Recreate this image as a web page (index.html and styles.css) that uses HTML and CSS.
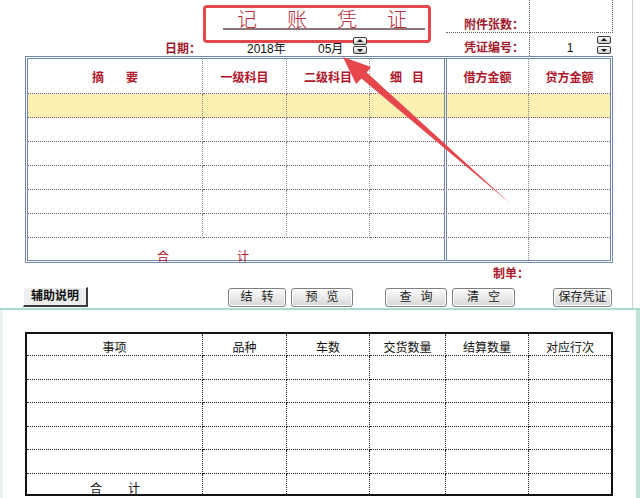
FILE: index.html
```html
<!DOCTYPE html>
<html lang="zh-CN">
<head>
    <meta charset="UTF-8">
    <title>记账凭证</title>
    <link rel="stylesheet" href="styles.css">
</head>
<body>
    <div class="page">
        <div class="sheet">
            <!-- heading: title, date, attachment count, voucher no. -->
            <div class="head">
                <div class="head-left">
                    <div class="title-row">
                        <div class="title-box"><span class="title">记账凭证</span></div>
                    </div>
                    <div class="date-row">
                        <span class="date-lbl">日期：</span>
                        <span class="year">2018年</span>
                        <span class="month">05月</span>
                        <div class="spin">
                            <span class="spin-btn up"></span>
                            <span class="spin-btn down"></span>
                        </div>
                    </div>
                </div>
                <div class="head-right">
                    <div class="info-lbl top sep">附件张数：</div>
                    <div class="info-val top"></div>
                    <div class="info-end top"></div>
                    <div class="info-lbl sep">凭证编号：</div>
                    <div class="info-val">1</div>
                    <div class="info-end">
                        <div class="spin">
                            <span class="spin-btn up"></span>
                            <span class="spin-btn down"></span>
                        </div>
                    </div>
                </div>
            </div>

            <!-- voucher entries -->
            <div class="voucher">
                <div class="vc hd spaced">摘要</div>
                <div class="vc hd">一级科目</div>
                <div class="vc hd">二级科目</div>
                <div class="vc hd m spaced-sm">细目</div>
                <div class="vc hd d">借方金额</div>
                <div class="vc hd cr">贷方金额</div>

                <div class="vc yl"></div><div class="vc yl"></div><div class="vc yl"></div><div class="vc yl m"></div><div class="vc yl d"></div><div class="vc yl cr"></div>
                <div class="vc"></div><div class="vc"></div><div class="vc"></div><div class="vc m"></div><div class="vc d"></div><div class="vc cr"></div>
                <div class="vc"></div><div class="vc"></div><div class="vc"></div><div class="vc m"></div><div class="vc d"></div><div class="vc cr"></div>
                <div class="vc"></div><div class="vc"></div><div class="vc"></div><div class="vc m"></div><div class="vc d"></div><div class="vc cr"></div>
                <div class="vc"></div><div class="vc"></div><div class="vc"></div><div class="vc m"></div><div class="vc d"></div><div class="vc cr"></div>
                <div class="vc"></div><div class="vc"></div><div class="vc"></div><div class="vc m"></div><div class="vc d"></div><div class="vc cr"></div>

                <div class="vc total"><span class="t1">合</span><span class="t2">计</span></div>
                <div class="vc d last"></div>
                <div class="vc cr last"></div>
            </div>

            <div class="maker">制单：</div>

            <div class="btnbar">
                <div class="aux">辅助说明</div>
                <div class="btn b-jz spaced-btn">结转</div>
                <div class="btn b-yl spaced-btn">预览</div>
                <div class="btn b-cx spaced-btn">查询</div>
                <div class="btn b-qk spaced-btn">清空</div>
                <div class="btn b-bc">保存凭证</div>
            </div>
        </div>
        <div class="rule"></div>

        <!-- delivery detail -->
        <div class="lower">
            <div class="detail">
                <div class="dc hd2">事项</div>
                <div class="dc hd2">品种</div>
                <div class="dc hd2">车数</div>
                <div class="dc hd2">交货数量</div>
                <div class="dc hd2">结算数量</div>
                <div class="dc hd2">对应行次</div>

                <div class="dc"></div><div class="dc"></div><div class="dc"></div><div class="dc"></div><div class="dc"></div><div class="dc"></div>
                <div class="dc"></div><div class="dc"></div><div class="dc"></div><div class="dc"></div><div class="dc"></div><div class="dc"></div>
                <div class="dc"></div><div class="dc"></div><div class="dc"></div><div class="dc"></div><div class="dc"></div><div class="dc"></div>
                <div class="dc"></div><div class="dc"></div><div class="dc"></div><div class="dc"></div><div class="dc"></div><div class="dc"></div>
                <div class="dc"></div><div class="dc"></div><div class="dc"></div><div class="dc"></div><div class="dc"></div><div class="dc"></div>

                <div class="dc sum"><span class="s1">合</span><span class="s2">计</span></div>
                <div class="dc"></div><div class="dc"></div><div class="dc"></div><div class="dc"></div><div class="dc"></div>
            </div>
        </div>

        <!-- red pointer arrow drawn over the sheet -->
        <svg class="arrow" width="640" height="498" viewBox="0 0 640 498">
            <polygon points="343,57 371,67 366.7,72.5 512.3,205.3 511.7,204.7 361.5,78.5 356,84" fill="#e5474c"/>
        </svg>
    </div>
</body>
</html>
```

FILE: styles.css
```css
body {
    margin: 0;
    background: #fff;
    font-family: "Liberation Sans", "Noto Sans CJK SC", sans-serif;
    font-size: 12px;
    color: #111;
}
.page {
    position: relative;
    width: 640px;
    height: 498px;
    overflow: hidden;
}
.sheet {
    width: 632px;
    height: 308px;
    border-right: 1px solid #cfcfcf;
}

/* heading */
.head {
    display: flex;
    height: 56px;
}
.head-left {
    width: 446px;
}
.title-row {
    height: 43px;
    padding: 5px 0 0 203px;
    box-sizing: border-box;
}
.title-box {
    width: 228px;
    height: 38px;
    border: 3px solid #e2474b;
    border-radius: 4px;
    box-sizing: border-box;
}
.title {
    display: block;
    width: 202px;
    height: 22px;
    margin-left: 17px;
    padding-left: 14px;
    box-sizing: border-box;
    border-bottom: 2px solid #8f7676;
    font-family: "Noto Sans CJK SC", sans-serif;
    font-weight: 300;
    font-size: 20px;
    line-height: 22px;
    letter-spacing: 30px;
    color: #b62a3a;
    white-space: nowrap;
}
.date-row {
    display: flex;
    height: 13px;
    line-height: 13px;
}
.date-lbl {
    width: 82px;
    margin-left: 165px;
    color: #a3192c;
    font-weight: bold;
}
.year { width: 71px; }
.month { width: 35px; }
.spin {
    display: flex;
    flex-direction: column;
    gap: 1px;
    margin-top: -6px;
}
.spin-btn {
    position: relative;
    display: block;
    width: 14px;
    height: 8px;
    box-sizing: border-box;
    border: 1px solid #3a3a3a;
    border-radius: 2px;
    background: linear-gradient(#ffffff, #c8c8c8);
}
.spin-btn::after {
    content: "";
    position: absolute;
    left: 3px;
    top: 1px;
    border-left: 3px solid transparent;
    border-right: 3px solid transparent;
}
.spin-btn.up::after { border-bottom: 3px solid #111; }
.spin-btn.down::after { border-top: 3px solid #111; top: 2px; }

.head-right {
    display: grid;
    grid-template-columns: 84px 67px 16px;
    grid-template-rows: 33px 23px;
}
.head-right > div {
    box-sizing: border-box;
    display: flex;
}
.head-right .top {
    border-bottom: 1px dotted #666;
}
.head-right .sep {
    border-right: 1px dotted #666;
}
.info-end.top {
    border-right: 1px dotted #666;
}
.info-lbl {
    justify-content: flex-end;
    align-items: flex-end;
    padding: 0 5px 2px 0;
    color: #a3192c;
    font-weight: bold;
    line-height: 12px;
}
.info-lbl.top { padding-bottom: 1px; }
.info-val {
    justify-content: center;
    align-items: flex-end;
    padding: 0 0 2px 13px;
    line-height: 12px;
}
.info-end .spin {
    margin-top: 3px;
    gap: 2px;
}

/* voucher grid */
.voucher {
    display: grid;
    grid-template-columns: 175px 84px 83px 74px 85px 81px;
    grid-template-rows: 35px repeat(6, 24px) 22px;
    width: max-content;
    margin-left: 25px;
    border: 3px double #7088b0;
}
.vc {
    box-sizing: border-box;
    display: flex;
    align-items: center;
    justify-content: center;
    border-right: 1px dotted #8c8c8c;
    border-bottom: 1px dotted #7b5a66;
}
.vc.m, .vc.cr { border-right: none; }
.vc.d { border-left: 3px double #7088b0; }
.vc.last { border-bottom: none; }
.vc.yl { background: #fcf0b3; }
.vc.hd {
    font-family: "Noto Sans CJK SC", sans-serif;
    font-weight: bold;
    color: #b0152a;
}
.spaced { letter-spacing: 22px; text-indent: 22px; }
.spaced-sm { letter-spacing: 10px; text-indent: 10px; }
.vc.total {
    grid-column: span 4;
    border: none;
    justify-content: flex-start;
    align-items: flex-end;
    color: #b0152a;
    font-family: "Noto Sans CJK SC", sans-serif;
    line-height: 12px;
}
.t1 { margin: 0 0 -2px 129px; }
.t2 { margin: 0 0 -2px 68px; }

.maker {
    height: 21px;
    padding-left: 493px;
    line-height: 22px;
    color: #b0152a;
    font-weight: bold;
}

/* buttons */
.btnbar {
    display: flex;
    align-items: flex-start;
    height: 24px;
    padding-top: 3px;
    box-sizing: border-box;
    width: 640px;
}
.aux {
    width: 65px;
    height: 20px;
    margin-left: 23px;
    box-sizing: border-box;
    background: #efefef;
    border-top: 1px solid #fff;
    border-left: 1px solid #fff;
    border-right: 2px solid #3c3c3c;
    border-bottom: 2px solid #3c3c3c;
    font-weight: bold;
    line-height: 17px;
    text-align: center;
}
.btn {
    height: 19px;
    margin-top: 1px;
    box-sizing: border-box;
    border: 1px solid #7f7f7f;
    border-radius: 3px;
    background: linear-gradient(#fdfdfd, #d6d6d6);
    box-shadow: inset 0 0 0 1px #fff;
    line-height: 17px;
    text-align: center;
    color: #222;
}
.spaced-btn { letter-spacing: 9px; text-indent: 9px; }
.b-jz { width: 58px; margin-left: 140px; }
.b-yl { width: 62px; margin-left: 5px; }
.b-cx { width: 62px; margin-left: 32px; }
.b-qk { width: 63px; margin-left: 5px; }
.b-bc { width: 59px; margin-left: 38px; }

.rule {
    height: 2px;
    background: #a9dbcb;
}

/* delivery detail grid */
.lower {
    height: 188px;
    padding: 22px 0 0 22px;
    box-sizing: border-box;
    border-left: 3px solid #e3f3ee;
    border-right: 4px solid #bfe4d7;
}
.detail {
    display: grid;
    grid-template-columns: 176px 84px 83px 76px 83px 82px;
    grid-template-rows: 22px 24px 23px 24px 23px 24px 20px;
    width: max-content;
    border: 2px solid #111;
}
.dc {
    box-sizing: border-box;
    display: flex;
    align-items: flex-end;
    justify-content: center;
    border-right: 1px dotted #222;
    border-bottom: 1px dotted #222;
    font-family: "Noto Sans CJK SC", sans-serif;
    line-height: 12px;
}
.dc:nth-child(6n) { border-right: none; }
.dc:nth-last-child(-n+6) { border-bottom: none; }
.hd2 { padding-bottom: 2px; }
.dc.sum { justify-content: flex-start; }
.s1 { margin-left: 63px; }
.s2 { margin-left: 26px; }

.arrow {
    position: absolute;
    left: 0;
    top: 0;
    pointer-events: none;
}
```
